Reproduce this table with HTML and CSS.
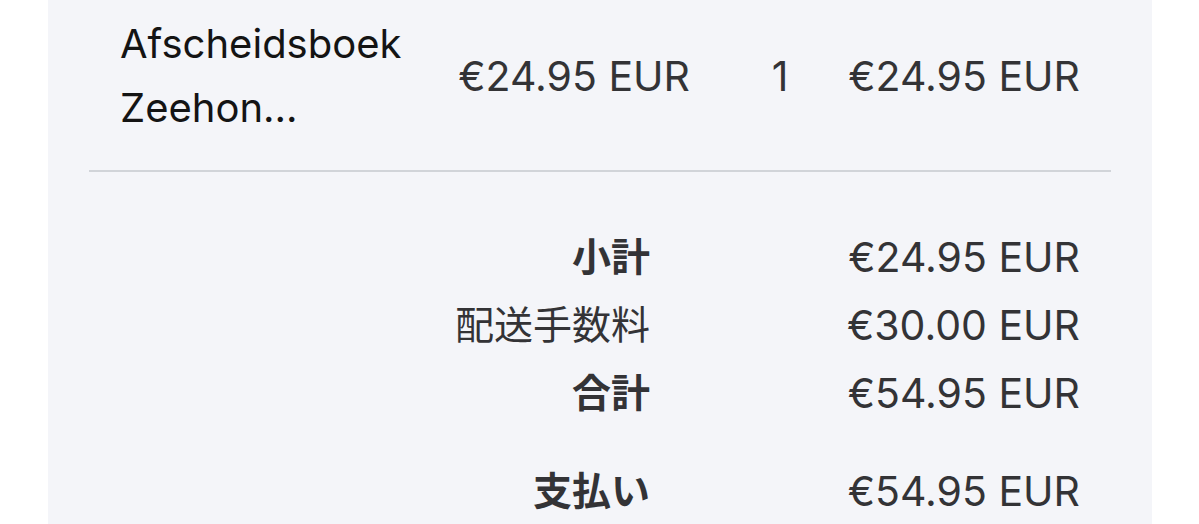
FILE: index.html
```html
<!DOCTYPE html>
<html lang="ja">
<head>
<meta charset="utf-8">
<title>Order summary</title>
<link rel="stylesheet" href="styles.css">
</head>
<body>
<div class="panel">
  <div class="item">
    <div class="item-name">Afscheidsboek<br>Zeehon...</div>
    <div class="item-price">€24.95 EUR</div>
    <div class="item-qty">1</div>
    <div class="item-total">€24.95 EUR</div>
  </div>
  <div class="divider"></div>
  <div class="summary">
    <div class="row"><span class="label strong">小計</span><span class="value">€24.95 EUR</span></div>
    <div class="row"><span class="label">配送手数料</span><span class="value">€30.00 EUR</span></div>
    <div class="row"><span class="label strong">合計</span><span class="value">€54.95 EUR</span></div>
    <div class="row row-pay"><span class="label strong">支払い</span><span class="value">€54.95 EUR</span></div>
  </div>
</div>
</body>
</html>
```
FILE: styles.css
```css
html, body {
  margin: 0;
  padding: 0;
  background: #ffffff;
}
body {
  font-family: "Inter", "Noto Sans CJK JP", sans-serif;
  color: #333336;
  overflow: hidden;
  height: 524px;
}
.panel {
  margin-left: 48px;
  width: 1104px;
  height: 524px;
  background: #f4f5f9;
  box-sizing: border-box;
  padding: 12px 41px 0 41px;
}
.item {
  display: grid;
  grid-template-columns: 330px 240px 150px 240px;
  align-items: center;
  padding: 0 31px 0 31px;
  font-size: 41px;
  line-height: 64px;
}
.item-name {
  color: #141414;
  font-size: 40px;
}
.item-price,
.item-total {
  text-align: right;
}
.item-qty {
  text-align: center;
  padding-left: 30px;
}
.divider {
  height: 2px;
  background: #d1d4d9;
  margin-top: 30px;
}
.summary {
  padding: 51px 31px 0 31px;
}
.row {
  display: grid;
  grid-template-columns: 1fr 430px;
  font-size: 41px;
  line-height: 68px;
}
.row-pay {
  margin-top: 30px;
}
.label {
  text-align: right;
  font-size: 39px;
}
.label.strong {
  font-weight: 700;
}
.value {
  text-align: right;
}
```
